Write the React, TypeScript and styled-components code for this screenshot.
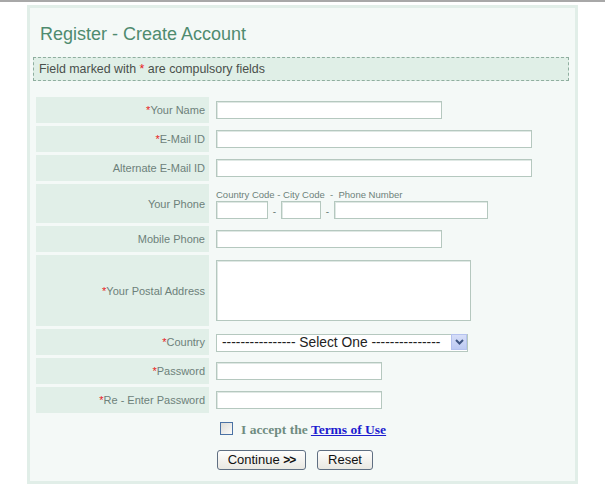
import React from "react";
import styled, { createGlobalStyle } from "styled-components";

const GlobalStyle = createGlobalStyle`
  html, body { margin: 0; padding: 0; background: #ffffff; }
  body { font-family: "Liberation Sans", Arial, sans-serif; }
  * { box-sizing: border-box; }
`;

const TopRule = styled.div`
  height: 2px;
  background: #a8a8a8;
`;

const Page = styled.div`
  padding: 3px 0 0 27px;
`;

const Panel = styled.div`
  width: 551px;
  height: 479px;
  border: 3px solid #e1eee8;
  background: #f4f9f7;
  padding: 15px 0 0 0;
`;

const Title = styled.h1`
  margin: 0 0 0 10px;
  font: normal 18px/22px "Liberation Sans", Arial, sans-serif;
  color: #4f8b6f;
  height: 22px;
`;

const Notice = styled.div`
  margin: 12px 0 0 3px;
  width: 536px;
  height: 24px;
  border: 1px dashed #8fae9f;
  background: #e0efe7;
  font-size: 12.4px;
  line-height: 22px;
  color: #4a4f4c;
  padding-left: 5px;
`;

const Star = styled.span`
  color: #e8191c;
`;

const FormGrid = styled.div`
  margin: 16px 0 0 6px;
  display: grid;
  grid-template-columns: 173px 1fr;
  column-gap: 3px;
  row-gap: 3px;
`;

const LabelCell = styled.div<{ $h: number }>`
  height: ${(p) => p.$h}px;
  background: #e1efe8;
  color: #6d817a;
  font-size: 11px;
  display: flex;
  align-items: center;
  justify-content: flex-end;
  padding-right: 4px;
`;

const FieldCell = styled.div`
  display: flex;
  flex-direction: column;
  justify-content: center;
  padding-left: 4px;
`;

const TextInput = styled.input<{ $w: number }>`
  width: ${(p) => p.$w}px;
  height: 18px;
  border: 1px solid #b5c8bf;
  box-shadow: inset 1px 1px 0 #dfe8e4;
  background: #fff;
  padding: 0 3px;
  margin: 0;
  font-size: 11px;
  outline: none;
`;

const TextArea = styled.textarea`
  width: 255px;
  height: 61px;
  border: 1px solid #b5c8bf;
  box-shadow: inset 1px 1px 0 #dfe8e4;
  background: #fff;
  resize: none;
  margin: 0;
  outline: none;
`;

const PhoneCaption = styled.div`
  font-size: 9.5px;
  color: #6d817a;
  line-height: 11px;
  margin-bottom: 1px;
  white-space: pre;
`;

const PhoneRow = styled.div`
  display: flex;
  align-items: center;
`;

const Dash = styled.span`
  width: 13px;
  text-align: center;
  font-size: 10px;
  color: #6d817a;
  padding-top: 3px;
`;

const SelectWrap = styled.div`
  position: relative;
  width: 252px;
  height: 18px;
`;

const Select = styled.select`
  appearance: none;
  -webkit-appearance: none;
  width: 100%;
  height: 18px;
  border: 1px solid #b5c8bf;
  background: #fff;
  font: 13.8px/16px "Liberation Sans", Arial, sans-serif;
  color: #222;
  padding: 0 0 0 5px;
  margin: 0;
  outline: none;
`;

const SelectArrow = styled.span`
  position: absolute;
  right: 1px;
  top: 1px;
  width: 16px;
  height: 16px;
  background: linear-gradient(#d6def8, #bccaf2);
  border: 1px solid #b4c2ee;
  display: flex;
  align-items: center;
  justify-content: center;
  pointer-events: none;
`;

const AgreeRow = styled.div`
  grid-column: 2;
  display: flex;
  align-items: center;
  padding: 5px 0 0 8px;
  height: 19px;
`;

const Check = styled.input`
  appearance: none;
  -webkit-appearance: none;
  width: 13px;
  height: 13px;
  margin: 0 8px 0 0;
  border: 1px solid #4a72a4;
  background: linear-gradient(135deg, #dcdcd7, #fbfbf9);
`;

const AgreeText = styled.span`
  font: bold 13.5px "Liberation Serif", "Times New Roman", serif;
  color: #6f8c80;
  padding-top: 3px;
`;

const TermsLink = styled.a`
  color: #1c1ccf;
  text-decoration: underline;
`;

const ButtonRow = styled.div`
  grid-column: 2;
  display: flex;
  gap: 11px;
  padding: 12px 0 0 5px;
`;

const Button = styled.button<{ $w: number }>`
  width: ${(p) => p.$w}px;
  height: 20px;
  border: 1px solid #5f6f82;
  border-radius: 3px;
  background: linear-gradient(#fefefd, #e9e8e2);
  font: 13px/16px "Liberation Sans", Arial, sans-serif;
  color: #111;
  padding: 0;
  margin: 0;
`;

const Gt = styled.b`
  font-size: 12px;
  letter-spacing: -1px;
`;

type Field = {
  label: string;
  req?: boolean;
  h: number;
  content: React.ReactNode;
};

const fields: Field[] = [
  { label: "Your Name", req: true, h: 26, content: <TextInput $w={226} /> },
  { label: "E-Mail ID", req: true, h: 26, content: <TextInput $w={316} /> },
  { label: "Alternate E-Mail ID", h: 26, content: <TextInput $w={316} /> },
  {
    label: "Your Phone",
    h: 39,
    content: (
      <>
        <PhoneCaption>{"Country Code - City Code  -  Phone Number"}</PhoneCaption>
        <PhoneRow>
          <TextInput $w={52} />
          <Dash>-</Dash>
          <TextInput $w={40} />
          <Dash>-</Dash>
          <TextInput $w={154} />
        </PhoneRow>
      </>
    ),
  },
  { label: "Mobile Phone", h: 26, content: <TextInput $w={226} /> },
  { label: "Your Postal Address", req: true, h: 71, content: <TextArea /> },
  {
    label: "Country",
    req: true,
    h: 26,
    content: (
      <SelectWrap>
        <Select defaultValue="">
          <option value="">---------------- Select One ---------------</option>
        </Select>
        <SelectArrow>
          <svg width="9" height="6" viewBox="0 0 9 6">
            <path d="M1 1 L4.5 4.5 L8 1" fill="none" stroke="#3f5683" strokeWidth="2" />
          </svg>
        </SelectArrow>
      </SelectWrap>
    ),
  },
  { label: "Password", req: true, h: 26, content: <TextInput $w={166} type="password" /> },
  { label: "Re - Enter Password", req: true, h: 26, content: <TextInput $w={166} type="password" /> },
];

export default function App() {
  return (
    <>
      <GlobalStyle />
      <TopRule />
      <Page>
        <Panel>
          <Title>Register - Create Account</Title>
          <Notice>
            Field marked with <Star>*</Star> are compulsory fields
          </Notice>
          <FormGrid>
            {fields.map((f) => (
              <React.Fragment key={f.label}>
                <LabelCell $h={f.h}>
                  {f.req && <Star>*</Star>}
                  {f.label}
                </LabelCell>
                <FieldCell>{f.content}</FieldCell>
              </React.Fragment>
            ))}
            <AgreeRow>
              <Check type="checkbox" />
              <AgreeText>
                I accept the <TermsLink href="#">Terms of Use</TermsLink>
              </AgreeText>
            </AgreeRow>
            <ButtonRow>
              <Button $w={89}>
                Continue <Gt>&gt;&gt;</Gt>
              </Button>
              <Button $w={56}>Reset</Button>
            </ButtonRow>
          </FormGrid>
        </Panel>
      </Page>
    </>
  );
}
